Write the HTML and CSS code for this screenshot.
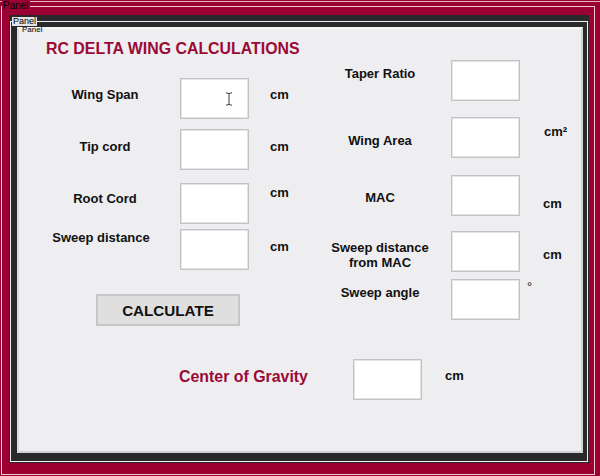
FILE: index.html
```html
<!DOCTYPE html>
<html>
<head>
<meta charset="utf-8">
<link rel="stylesheet" href="styles.css">
</head>
<body>
<div class="frame">
  <span class="tag tag1">Panel</span>
  <div class="dark">
    <span class="tag tag2">Panel</span>
    <div class="dark-inner">
      <div class="light">
        <span class="tag tag3">Panel</span>
        <div class="content">
          <div class="cols">
            <div class="col-left">
              <h1 class="title">RC DELTA WING CALCULATIONS</h1>
              <div class="row l1">
                <span class="lbl">Wing Span</span>
                <span class="box">
                  <svg class="ibeam" width="8" height="14" viewBox="0 0 8 14"><path d="M1 1h2l1 1l1-1h2M4 2v10M1 13h2l1-1l1 1h2" fill="none" stroke="#3a3a3a" stroke-width="1"/></svg>
                </span>
                <span class="unit">cm</span>
              </div>
              <div class="row l2">
                <span class="lbl">Tip cord</span>
                <span class="box"></span>
                <span class="unit">cm</span>
              </div>
              <div class="row l3">
                <span class="lbl">Root Cord</span>
                <span class="box"></span>
                <span class="unit">cm</span>
              </div>
              <div class="row l4">
                <span class="lbl">Sweep distance</span>
                <span class="box"></span>
                <span class="unit">cm</span>
              </div>
              <button class="calc">CALCULATE</button>
            </div>
            <div class="col-right">
              <div class="row r1">
                <span class="lbl">Taper Ratio</span>
                <span class="box"></span>
              </div>
              <div class="row r2">
                <span class="lbl">Wing Area</span>
                <span class="box"></span>
                <span class="unit">cm²</span>
              </div>
              <div class="row r3">
                <span class="lbl">MAC</span>
                <span class="box"></span>
                <span class="unit">cm</span>
              </div>
              <div class="row r4">
                <span class="lbl">Sweep distance<br>from MAC</span>
                <span class="box"></span>
                <span class="unit">cm</span>
              </div>
              <div class="row r5">
                <span class="lbl">Sweep angle</span>
                <span class="box"></span>
                <span class="unit deg">°</span>
              </div>
            </div>
          </div>
          <div class="row cog">
            <span class="lbl cog-lbl">Center of Gravity</span>
            <span class="box"></span>
            <span class="unit">cm</span>
          </div>
        </div>
      </div>
    </div>
  </div>
</div>
</body>
</html>
```
FILE: styles.css
```css
html, body {
  margin: 0;
  padding: 0;
}
body {
  width: 600px;
  height: 476px;
  overflow: hidden;
  background: linear-gradient(to bottom, #9b0032 1px, #e6b3c1 1px, #e6b3c1 2px, #9b0032 2px);
  font-family: "Liberation Sans", Arial, sans-serif;
  color: #111;
}
.frame {
  position: relative;
  margin: 6px 5px 1px 1px;
  width: 592px;
  height: 467px;
  border: 1px solid rgba(255, 235, 240, 0.85);
}
.tag {
  position: absolute;
  font-family: "Liberation Sans", Arial, sans-serif;
  color: #000;
  padding: 0 1px;
  white-space: nowrap;
}
.tag1 {
  left: 0;
  top: -6px;
  font-size: 10px;
  line-height: 10px;
  background: #9b0032;
}
.tag2 {
  left: 3px;
  top: 2px;
  font-size: 9px;
  line-height: 9px;
  background: #e4e4e6;
  z-index: 2;
}
.tag3 {
  left: 2px;
  top: -3px;
  font-size: 8px;
  line-height: 8px;
}
.dark {
  position: relative;
  margin: 8px 0 0 7px;
  width: 580px;
  height: 448px;
  box-sizing: border-box;
  padding: 6px 1px 1px 1px;
  background: #2a2a2d;
}
.dark-inner {
  height: 100%;
  box-sizing: border-box;
  border: 1px solid #f0f0f0;
}
.light {
  position: relative;
  margin: 5px 0 0 6px;
  width: 566px;
  height: 426px;
  box-sizing: border-box;
  background: #eeedf0;
  border: 2px solid #d2d1d4;
  border-top-color: #f6f6f7;
  border-left-color: #dcdcde;
}
.content {
  padding: 11px 0 0 27px;
}
.cols {
  display: flex;
}
.col-left {
  width: 279px;
  display: flex;
  flex-direction: column;
  align-items: flex-start;
}
.col-right {
  padding-top: 20px;
  display: flex;
  flex-direction: column;
}
.title {
  margin: 0;
  font-size: 15.9px;
  line-height: 18px;
  font-weight: bold;
  color: #9b0a35;
  white-space: nowrap;
}
.row {
  display: flex;
  align-items: flex-start;
  height: 41px;
}
.lbl {
  font-size: 13px;
  line-height: 15px;
  font-weight: bold;
  text-align: center;
  white-space: nowrap;
}
.col-left .lbl {
  width: 118px;
}
.col-right .lbl {
  width: 110px;
}
.box {
  position: relative;
  flex: none;
  width: 69px;
  height: 41px;
  box-sizing: border-box;
  margin-left: 16px;
  background: #ffffff;
  border: 1px solid #c3c3c5;
  box-shadow: inset 0 0 0 1px #e4e4e6;
}
.unit {
  font-size: 13px;
  line-height: 15px;
  font-weight: bold;
  margin-left: 21px;
}
.col-right .unit {
  margin-left: 23px;
}
.ibeam {
  position: absolute;
  left: 44px;
  top: 13px;
}

/* left rows */
.l1 { margin-top: 20px; }
.l1 .lbl { margin-top: 9px; }
.l1 .unit { margin-top: 9px; }
.l2 { margin-top: 10px; }
.l2 .lbl { margin-top: 10px; }
.l2 .unit { margin-top: 10px; }
.l3 { margin-top: 13px; }
.l3 .lbl { margin-top: 8px; }
.l3 .unit { margin-top: 2px; }
.l4 { margin-top: 5px; }
.l4 .lbl { margin-top: 1px; margin-left: -4px; margin-right: 4px; }
.l4 .unit { margin-top: 10px; }

/* right rows */
.r1 .lbl { margin-top: 6px; }
.r2 { margin-top: 16px; }
.r2 .lbl { margin-top: 16px; }
.r2 .unit { margin-top: 7px; margin-left: 24px; }
.r3 { margin-top: 17px; }
.r3 .lbl { margin-top: 15px; }
.r3 .unit { margin-top: 21px; }
.r4 { margin-top: 15px; }
.r4 .lbl { margin-top: 9px; }
.r4 .unit { margin-top: 16px; }
.r5 { margin-top: 7px; }
.r5 .lbl { margin-top: 6px; }
.col-right .deg { margin-top: 0; margin-left: 7px; font-weight: normal; }

.calc {
  margin: 24px 0 0 50px;
  width: 144px;
  height: 32px;
  box-sizing: border-box;
  padding: 0;
  background: #dfdfe0;
  border: 2px solid #c6c6c8;
  font-family: "Liberation Sans", Arial, sans-serif;
  font-size: 15.2px;
  font-weight: bold;
  color: #111;
}

.cog {
  margin: 33px 0 0 133px;
}
.cog-lbl {
  width: 129px;
  margin-top: 9px;
  font-size: 15.9px;
  line-height: 18px;
  color: #9b0a35;
}
.cog .box {
  margin-left: 45px;
}
.cog .unit {
  margin-left: 23px;
  margin-top: 9px;
}
```
